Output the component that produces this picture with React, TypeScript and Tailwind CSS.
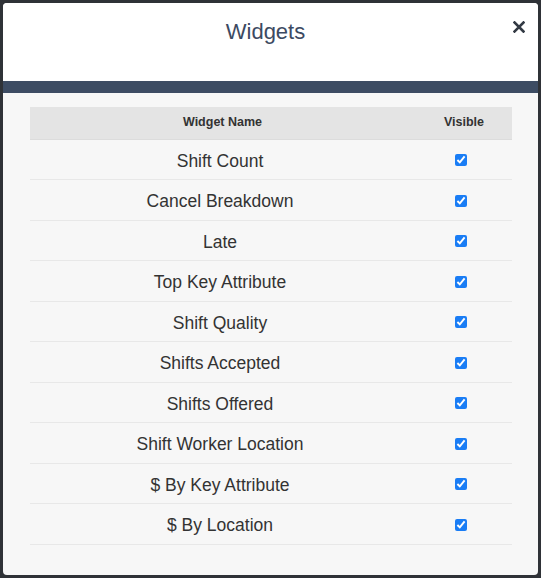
const widgets = [
  "Shift Count",
  "Cancel Breakdown",
  "Late",
  "Top Key Attribute",
  "Shift Quality",
  "Shifts Accepted",
  "Shifts Offered",
  "Shift Worker Location",
  "$ By Key Attribute",
  "$ By Location",
];

export default function App() {
  return (
    <div
      className="w-[541px] h-[578px] bg-[#2f3237] p-[3px]"
      style={{ fontFamily: '"Liberation Sans", Arial, sans-serif' }}
    >
      <div className="h-[572px] w-[535px] rounded-[4px] overflow-hidden bg-[#f7f7f7] flex flex-col">
        {/* Header */}
        <div className="relative h-[78px] bg-white flex justify-center pt-[14px] pr-[10px]">
          <h1 className="text-[22px] leading-[30px] text-[#3c4a62]">Widgets</h1>
          <button className="absolute right-[13px] top-[18px] text-[#333a44]">
            <svg width="12" height="12" viewBox="0 0 12 12">
              <path
                d="M1.5 1.5 L10.5 10.5 M10.5 1.5 L1.5 10.5"
                stroke="currentColor"
                strokeWidth="2.6"
                strokeLinecap="square"
              />
            </svg>
          </button>
        </div>
        <div className="h-[12px] bg-[#3d4c63]" />

        {/* Body */}
        <div className="px-[27px] pt-[14px]">
          <table className="w-[482px] border-collapse text-[#333]">
            <thead>
              <tr className="bg-[#e4e4e4] h-[32px] border-b border-[#dcdcdc]">
                <th className="w-[380px] pl-[5px] text-[12.5px] font-bold text-center">
                  Widget Name
                </th>
                <th className="pl-[6px] text-[12.5px] font-bold text-center">Visible</th>
              </tr>
            </thead>
            <tbody>
              {widgets.map((w) => (
                <tr key={w} className="h-[40.5px] border-b border-[#e8e8e8]">
                  <td className="text-[17.5px] text-center pt-[3px]">{w}</td>
                  <td className="text-center">
                    <input
                      type="checkbox"
                      defaultChecked
                      className="accent-[#1a7df5] w-[12px] h-[12px] align-middle"
                    />
                  </td>
                </tr>
              ))}
            </tbody>
          </table>
        </div>
      </div>
    </div>
  );
}
